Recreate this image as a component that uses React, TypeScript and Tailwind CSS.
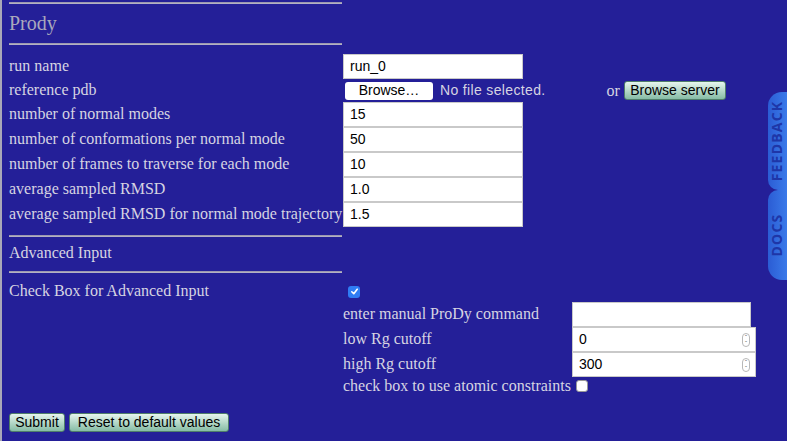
import React from "react";

const serif = { fontFamily: '"Liberation Serif", "Times New Roman", serif' };
const sans = { fontFamily: '"Liberation Sans", Arial, sans-serif' };

function Hr() {
  return <div className="h-[2px] w-[333px] bg-[#b3b0c4] border-t border-[#9c99b0]" />;
}

function TextBox({ value, w = "w-[180px]", h = "h-[25px]", spin = false }: { value: string; w?: string; h?: string; spin?: boolean }) {
  return (
    <div className={`${w} ${h} bg-white border border-[#c9c9c9] flex items-center pl-[6px] pr-[5px] text-[14px] text-black`} style={sans}>
      <span className="flex-1">{value}</span>
      {spin && (
        <span className="w-[8px] h-[14px] rounded-[4px] border border-[#b8b8b8] flex flex-col items-center justify-center text-[6px] leading-[6px] text-[#666]">
          <span>ˆ</span>
          <span>ˇ</span>
        </span>
      )}
    </div>
  );
}

function GreenBtn({ children, className = "" }: { children: React.ReactNode; className?: string }) {
  return (
    <div
      className={`h-[19px] rounded-[3px] border border-[#4f7e6a] bg-gradient-to-b from-[#e6f5ee] to-[#86bca5] flex items-center justify-center text-[14px] text-black ${className}`}
      style={sans}
    >
      {children}
    </div>
  );
}

function Row({ label, children, h = "h-[25px]" }: { label: string; children: React.ReactNode; h?: string }) {
  return (
    <div className={`flex ${h}`}>
      <div className="w-[334px] flex items-center pb-[2px] text-[16px] text-[#d6d4e2] whitespace-nowrap" style={serif}>
        {label}
      </div>
      <div className="flex items-center">{children}</div>
    </div>
  );
}

function Check({ checked }: { checked: boolean }) {
  return checked ? (
    <div className="w-[12px] h-[12px] rounded-[3px] bg-[#2f7cf4] flex items-center justify-center">
      <svg width="9" height="9" viewBox="0 0 10 10">
        <path d="M2 5.3 L4.2 7.5 L8 2.5" stroke="white" strokeWidth="1.8" fill="none" strokeLinecap="round" strokeLinejoin="round" />
      </svg>
    </div>
  ) : (
    <div className="w-[12px] h-[12px] rounded-[3px] bg-white border border-[#999]" />
  );
}

const tabFont = { fontFamily: '"Open Sans", "Liberation Sans", sans-serif' };

export default function App() {
  return (
    <div className="w-[787px] h-[441px] bg-[#241f98] relative overflow-hidden">
      <div className="h-full border-l-2 border-[#a9a7b8] pl-[7px] pt-[2px]">
        <Hr />
        <div className="h-[39px] flex items-center pb-[2px] text-[20px] text-[#aaa8bc]" style={serif}>
          Prody
        </div>
        <Hr />
        <div className="h-[9px]" />
        <Row label="run name">
          <TextBox value="run_0" />
        </Row>
        <Row label="reference pdb" h="h-[23px]">
          <div className="flex items-center">
            <div className="ml-[2px] w-[88px] h-[18px] bg-white rounded-[3px] flex items-center justify-center text-[14px] text-black" style={sans}>
              Browse…
            </div>
            <span className="ml-[7px] text-[14px] tracking-[0.35px] text-[#d6d4e2]" style={sans}>
              No file selected.
            </span>
            <span className="ml-[61px] text-[16px] text-[#d6d4e2]" style={serif}>
              or
            </span>
            <GreenBtn className="ml-[4px] w-[102px]">Browse server</GreenBtn>
          </div>
        </Row>
        <Row label="number of normal modes">
          <TextBox value="15" />
        </Row>
        <Row label="number of conformations per normal mode">
          <TextBox value="50" />
        </Row>
        <Row label="number of frames to traverse for each mode">
          <TextBox value="10" />
        </Row>
        <Row label="average sampled RMSD">
          <TextBox value="1.0" />
        </Row>
        <Row label="average sampled RMSD for normal mode trajectory">
          <TextBox value="1.5" />
        </Row>
        <div className="h-[8px]" />
        <Hr />
        <div className="h-[34px] flex items-center pb-[2px] text-[16px] text-[#d6d4e2]" style={serif}>
          Advanced Input
        </div>
        <Hr />
        <div className="h-[8px]" />
        <Row label="Check Box for Advanced Input" h="h-[21px]">
          <div className="ml-[5px]">
            <Check checked />
          </div>
        </Row>
        <div className="pl-[334px]">
          <div className="flex h-[25px]">
            <div className="w-[229px] flex items-center pb-[2px] text-[16px] text-[#d6d4e2]" style={serif}>
              enter manual ProDy command
            </div>
            <TextBox value="" w="w-[179px]" />
          </div>
          <div className="flex h-[25px]">
            <div className="w-[229px] flex items-center pb-[2px] text-[16px] text-[#d6d4e2]" style={serif}>
              low Rg cutoff
            </div>
            <TextBox value="0" w="w-[184px]" spin />
          </div>
          <div className="flex h-[25px]">
            <div className="w-[229px] flex items-center pb-[2px] text-[16px] text-[#d6d4e2]" style={serif}>
              high Rg cutoff
            </div>
            <TextBox value="300" w="w-[184px]" spin />
          </div>
          <div className="flex h-[18px] items-center">
            <span className="text-[16px] text-[#d6d4e2] whitespace-nowrap" style={serif}>
              check box to use atomic constraints
            </span>
            <span className="ml-[5px]">
              <Check checked={false} />
            </span>
          </div>
        </div>
        <div className="h-[18px]" />
        <div className="flex gap-[4px]">
          <GreenBtn className="w-[56px]">Submit</GreenBtn>
          <GreenBtn className="w-[160px]">Reset to default values</GreenBtn>
        </div>
      </div>

      {/* side tabs */}
      <div className="absolute right-0 top-[92px] w-[19px] flex flex-col">
        <div className="h-[98px] rounded-tl-[14px] rounded-bl-[10px] bg-gradient-to-r from-[#2b5cd4] to-[#3b7ae9] flex items-center justify-center">
          <span className="-rotate-90 whitespace-nowrap text-[14px] leading-none font-bold text-[#1e36a8] tracking-[1.2px]" style={tabFont}>
            FEEDBACK
          </span>
        </div>
        <div className="h-[90px] rounded-tl-[10px] rounded-bl-[14px] bg-gradient-to-r from-[#2b5cd4] to-[#3b7ae9] flex items-center justify-center">
          <span className="-rotate-90 whitespace-nowrap text-[14px] leading-none font-bold text-[#1e36a8] tracking-[1.2px]" style={tabFont}>
            DOCS
          </span>
        </div>
      </div>
    </div>
  );
}
